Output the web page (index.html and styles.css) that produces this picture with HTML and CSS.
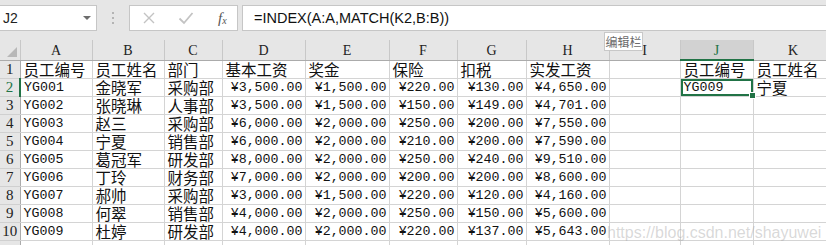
FILE: index.html
```html
<!DOCTYPE html>
<html lang="zh-CN">
<head>
  <meta charset="UTF-8" />
  <title>INDEX MATCH</title>
  <link rel="stylesheet" href="styles.css">
</head>
<body>
  <div class="page">
    <div class="toolbar">
      <div class="name-box">
        <span>J2</span>
        <span class="caret"></span>
      </div>
      <div class="grip">
        <svg width="3" height="14" viewBox="0 0 3 14"><rect x="0" y="1" width="2" height="2" fill="#b4b4b4"/><rect x="0" y="6" width="2" height="2" fill="#b4b4b4"/><rect x="0" y="11" width="2" height="2" fill="#b4b4b4"/></svg>
      </div>
      <div class="btn-box">
        <svg class="btn" width="14" height="14" viewBox="0 0 14 14"><path d="M2 2 L12 12 M12 2 L2 12" stroke="#c3c3c3" stroke-width="1.4" fill="none"/></svg>
        <svg class="btn" width="16" height="14" viewBox="0 0 16 14"><path d="M1.5 7.5 L6 12 L14.5 2" stroke="#c3c3c3" stroke-width="1.8" fill="none"/></svg>
        <span class="fx">f<sub>x</sub></span>
      </div>
      <div class="formula">=INDEX(A:A,MATCH(K2,B:B))</div>
    </div>

    <span class="tip">编辑栏</span>

    <table class="sheet">
      <colgroup>
        <col class="c-rh"><col class="c-a"><col class="c-b"><col class="c-c"><col class="c-d"><col class="c-e">
        <col class="c-f"><col class="c-g"><col class="c-h"><col class="c-i"><col class="c-j"><col class="c-k">
      </colgroup>
      <tr class="hdr">
        <th class="corner"><span class="tri"></span></th>
        <th>A</th><th>B</th><th>C</th><th>D</th><th>E</th><th>F</th><th>G</th><th>H</th><th>I</th><th class="sel">J</th><th>K</th>
      </tr>
      <tr>
        <th class="rh">1</th>
        <td class="cn">员工编号</td><td class="cn">员工姓名</td><td class="cn">部门</td><td class="cn">基本工资</td><td class="cn">奖金</td><td class="cn">保险</td><td class="cn">扣税</td><td class="cn">实发工资</td><td></td><td class="cn">员工编号</td><td class="cn">员工姓名</td>
      </tr>
      <tr>
        <th class="rh sel">2</th>
        <td>YG001</td><td class="cn">金晓军</td><td class="cn">采购部</td><td class="num">¥3,500.00</td><td class="num">¥1,500.00</td><td class="num">¥220.00</td><td class="num">¥130.00</td><td class="num">¥4,650.00</td><td></td><td class="active">YG009</td><td class="cn">宁夏</td>
      </tr>
      <tr>
        <th class="rh">3</th>
        <td>YG002</td><td class="cn">张晓琳</td><td class="cn">人事部</td><td class="num">¥3,500.00</td><td class="num">¥1,500.00</td><td class="num">¥150.00</td><td class="num">¥149.00</td><td class="num">¥4,701.00</td><td></td><td></td><td></td>
      </tr>
      <tr>
        <th class="rh">4</th>
        <td>YG003</td><td class="cn">赵三</td><td class="cn">采购部</td><td class="num">¥6,000.00</td><td class="num">¥2,000.00</td><td class="num">¥250.00</td><td class="num">¥200.00</td><td class="num">¥7,550.00</td><td></td><td></td><td></td>
      </tr>
      <tr>
        <th class="rh">5</th>
        <td>YG004</td><td class="cn">宁夏</td><td class="cn">销售部</td><td class="num">¥6,000.00</td><td class="num">¥2,000.00</td><td class="num">¥210.00</td><td class="num">¥200.00</td><td class="num">¥7,590.00</td><td></td><td></td><td></td>
      </tr>
      <tr>
        <th class="rh">6</th>
        <td>YG005</td><td class="cn">葛冠军</td><td class="cn">研发部</td><td class="num">¥8,000.00</td><td class="num">¥2,000.00</td><td class="num">¥250.00</td><td class="num">¥240.00</td><td class="num">¥9,510.00</td><td></td><td></td><td></td>
      </tr>
      <tr>
        <th class="rh">7</th>
        <td>YG006</td><td class="cn">丁玲</td><td class="cn">财务部</td><td class="num">¥7,000.00</td><td class="num">¥2,000.00</td><td class="num">¥200.00</td><td class="num">¥200.00</td><td class="num">¥8,600.00</td><td></td><td></td><td></td>
      </tr>
      <tr>
        <th class="rh">8</th>
        <td>YG007</td><td class="cn">郝帅</td><td class="cn">采购部</td><td class="num">¥3,000.00</td><td class="num">¥1,500.00</td><td class="num">¥220.00</td><td class="num">¥120.00</td><td class="num">¥4,160.00</td><td></td><td></td><td></td>
      </tr>
      <tr>
        <th class="rh">9</th>
        <td>YG008</td><td class="cn">何翠</td><td class="cn">销售部</td><td class="num">¥4,000.00</td><td class="num">¥2,000.00</td><td class="num">¥250.00</td><td class="num">¥150.00</td><td class="num">¥5,600.00</td><td></td><td></td><td></td>
      </tr>
      <tr>
        <th class="rh">10</th>
        <td>YG009</td><td class="cn">杜婷</td><td class="cn">研发部</td><td class="num">¥4,000.00</td><td class="num">¥2,000.00</td><td class="num">¥220.00</td><td class="num">¥137.00</td><td class="num">¥5,643.00</td><td></td><td></td><td></td>
      </tr>
      <tr>
        <th class="rh"></th>
        <td></td><td></td><td></td><td></td><td></td><td></td><td></td><td></td><td></td><td></td><td></td>
      </tr>
    </table>

    <span class="watermark">https://blog.csdn.net/shayuwei</span>
  </div>
</body>
</html>
```

FILE: styles.css
```css
body {
  margin: 0;
  background: #e6e6e6;
  overflow: hidden;
}

.page {
  position: relative;
  width: 826px;
  height: 245px;
  overflow: hidden;
}

/* Formula bar */
.toolbar {
  display: flex;
  align-items: flex-start;
  height: 40px;
  padding-top: 5px;
  box-sizing: border-box;
  background: #e6e6e6;
  font-family: "Liberation Sans", "Noto Sans CJK SC", sans-serif;
  font-size: 14px;
  color: #222;
}

.name-box {
  display: flex;
  align-items: center;
  justify-content: space-between;
  width: 97px;
  height: 26px;
  padding: 0 5px 0 3px;
  box-sizing: border-box;
  background: #fff;
  border: 1px solid #c6c6c6;
  border-left: none;
}

.caret {
  width: 0;
  height: 0;
  border-left: 4px solid transparent;
  border-right: 4px solid transparent;
  border-top: 4px solid #6d6d6d;
}

.grip {
  display: flex;
  align-items: center;
  justify-content: center;
  width: 32px;
  height: 26px;
}

.btn-box {
  display: flex;
  align-items: center;
  width: 109px;
  height: 26px;
  box-sizing: border-box;
  padding-left: 12px;
  gap: 22px;
  background: #fff;
  border: 1px solid #c6c6c6;
}

.fx {
  font-family: "Liberation Serif", serif;
  font-style: italic;
  font-size: 15px;
  color: #555;
  margin-left: 2px;
}

.fx sub {
  font-size: 10px;
  vertical-align: -1px;
}

.formula {
  flex: 1;
  height: 26px;
  margin-left: 4px;
  padding-left: 11px;
  box-sizing: border-box;
  line-height: 24px;
  background: #fff;
  border: 1px solid #c6c6c6;
  border-right: none;
  font-size: 14.5px;
  color: #111;
}

.tip {
  position: absolute;
  left: 604px;
  top: 32px;
  width: 39px;
  height: 19px;
  box-sizing: border-box;
  background: #fff;
  border: 1px solid #c8c8c8;
  font-family: "Noto Sans CJK SC", sans-serif;
  font-size: 12px;
  line-height: 17px;
  text-align: center;
  color: #6a6a6a;
  z-index: 2;
}

/* Sheet grid */
.sheet {
  table-layout: fixed;
  border-collapse: collapse;
  width: 833px;
  background: #fff;
  font-family: "Liberation Mono", "Noto Sans CJK SC", monospace;
  font-size: 13.3px;
  color: #111;
}

.c-rh { width: 20px; }
.c-a { width: 72px; }
.c-b { width: 72px; }
.c-c { width: 58px; }
.c-d { width: 83px; }
.c-e { width: 84px; }
.c-f { width: 68px; }
.c-g { width: 69px; }
.c-h { width: 83px; }
.c-i { width: 71px; }
.c-j { width: 73px; }
.c-k { width: 80px; }

.sheet tr {
  height: 18px;
}

.sheet th {
  padding: 0;
  font-weight: normal;
  background: #e6e6e6;
  font-family: "Liberation Serif", serif;
  color: #222;
}

.hdr th {
  height: 17px;
  font-size: 14px;
  line-height: 16px;
  padding-top: 2px;
  border-right: 1px solid #c8c8c8;
  border-bottom: 1px solid #ababab;
}

.hdr th.sel {
  background: #d2d2d2;
  color: #217346;
  border-bottom: 2px solid #217346;
}

.corner {
  position: relative;
}

.tri {
  position: absolute;
  right: 3px;
  bottom: 3px;
  width: 0;
  height: 0;
  border-left: 10px solid transparent;
  border-bottom: 10px solid #b8b8b8;
}

.rh {
  font-size: 15px;
  line-height: 17px;
  text-align: center;
  border-right: 1px solid #ababab;
  border-bottom: 1px solid #d0d0d0;
  vertical-align: bottom;
}

.rh.sel {
  color: #217346;
  border-right: 2px solid #217346;
}

.sheet td {
  height: 17px;
  padding: 0 3px;
  line-height: 17px;
  white-space: nowrap;
  vertical-align: bottom;
  border: 1px solid #d4d4d4;
}

.sheet td.cn {
  font-family: "Noto Sans CJK SC", sans-serif;
  font-size: 15.5px;
  line-height: 17px;
}

.sheet td.num {
  text-align: right;
  padding-right: 2px;
}

.sheet td.active {
  position: relative;
  box-shadow: inset 0 0 0 2px #217346;
}

.sheet td.active::after {
  content: "";
  position: absolute;
  right: -3px;
  bottom: -3px;
  width: 5px;
  height: 5px;
  background: #217346;
  border: 1px solid #fff;
}

.watermark {
  position: absolute;
  left: 607px;
  top: 224px;
  font-family: "Liberation Sans", sans-serif;
  font-size: 16px;
  color: rgba(170, 170, 170, 0.45);
  white-space: nowrap;
}
```
